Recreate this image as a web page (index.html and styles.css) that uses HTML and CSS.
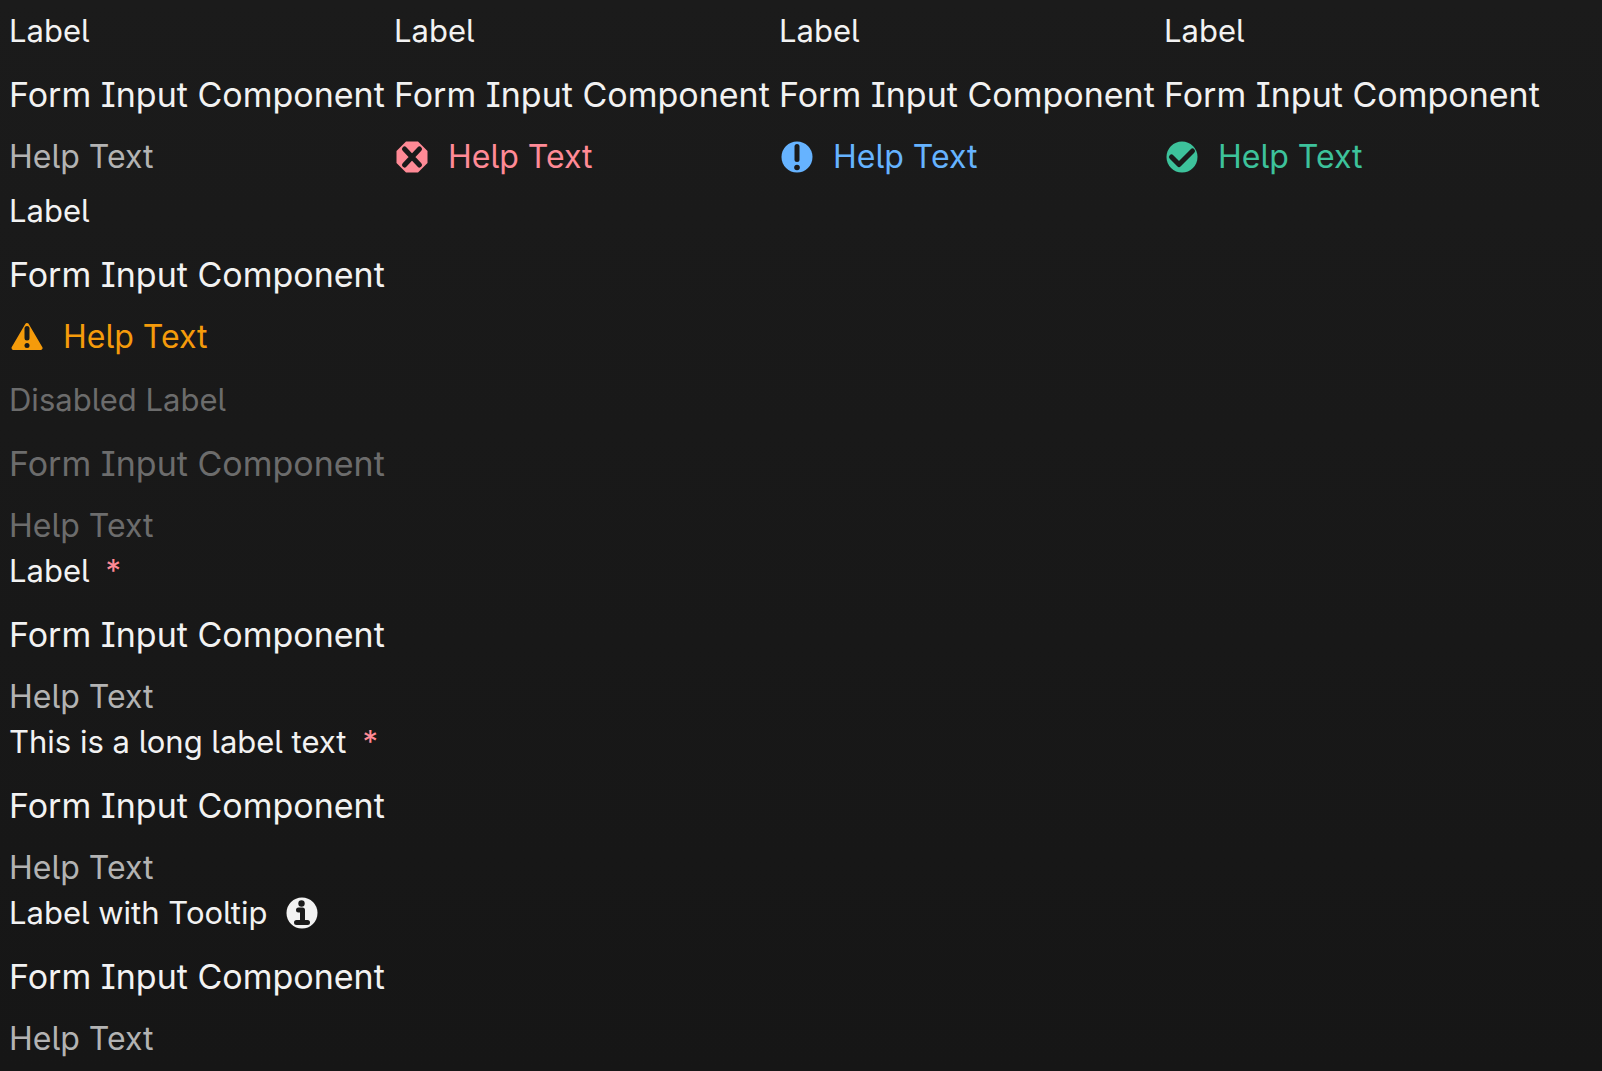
FILE: index.html
```html
<!DOCTYPE html>
<html lang="en">
<head>
<meta charset="utf-8">
<title>Form fields</title>
<link rel="stylesheet" href="styles.css">
</head>
<body>
<main class="fields">
  <div class="row row-status">
    <section class="field"><h2 class="label">Label</h2><p class="control">Form Input Component</p><p class="help">Help Text</p></section>
    <section class="field"><h2 class="label">Label</h2><p class="control">Form Input Component</p>
      <p class="help error"><svg class="icon" viewBox="0 0 32 32" aria-hidden="true"><path fill="currentColor" d="M10 0.500H22L31.500 10V22L22 31.500H10L0.500 22V10Z"/><path class="cut" d="M8.500 8L23.500 24M23.500 8L8.500 24"/></svg>Help Text</p></section>
    <section class="field"><h2 class="label">Label</h2><p class="control">Form Input Component</p>
      <p class="help info"><svg class="icon" viewBox="0 0 32 32" aria-hidden="true"><circle cx="16" cy="16" r="15.500" fill="currentColor"/><path class="cut" d="M16 5.500V18.500"/><circle class="dot" cx="16" cy="26.500" r="2.800"/></svg>Help Text</p></section>
    <section class="field"><h2 class="label">Label</h2><p class="control">Form Input Component</p>
      <p class="help success"><svg class="icon" viewBox="0 0 32 32" aria-hidden="true"><circle cx="16" cy="16" r="15.500" fill="currentColor"/><path class="cut" d="M5.500 16L13 23.500L26.500 10"/></svg>Help Text</p></section>
  </div>
  <div class="row row-warning">
    <section class="field"><h2 class="label">Label</h2><p class="control">Form Input Component</p>
      <p class="help warning"><svg class="icon" viewBox="0 0 32 32" aria-hidden="true"><path fill="currentColor" stroke="currentColor" stroke-width="4" stroke-linejoin="round" d="M16 4L29.500 27H2.500Z"/><path class="cut" d="M16 7.500V17"/><circle class="dot" cx="16" cy="24.500" r="2.500"/></svg>Help Text</p></section>
  </div>
  <section class="field disabled"><h2 class="label">Disabled Label</h2><p class="control">Form Input Component</p><p class="help">Help Text</p></section>
  <section class="field"><h2 class="label">Label<span class="required">*</span></h2><p class="control">Form Input Component</p><p class="help">Help Text</p></section>
  <section class="field"><h2 class="label">This is a long label text<span class="required">*</span></h2><p class="control">Form Input Component</p><p class="help">Help Text</p></section>
  <section class="field"><h2 class="label">Label with Tooltip<button class="tip" type="button" aria-label="More information"><svg class="icon" viewBox="0 0 32 32" aria-hidden="true"><circle cx="16" cy="16" r="15.500" fill="currentColor"/><circle class="dot" cx="15.500" cy="6.500" r="3.200"/><path class="cut" d="M12.500 13H16.500V25M10.500 25.500H21.500"/></svg></button></h2><p class="control">Form Input Component</p><p class="help">Help Text</p></section>
</main>
</body>
</html>
```
FILE: styles.css
```css
body {
  margin: 0;
  min-height: 100vh;
  background: linear-gradient(#1b1b1b, #161616);
  color: #f2f2f2;
  font-family: Inter, "Noto Sans", sans-serif;
  font-feature-settings: "cv05", "cv08";
}

.fields {
  padding: 8px 0 0 9px;
}

.row {
  display: flex;
  flex-wrap: wrap;
  gap: 10px;
}

.row-status {
  padding-bottom: 9px;
}

.row-warning {
  padding-bottom: 18px;
}

.field {
  width: 375px;
  white-space: nowrap;
}

.label {
  display: flex;
  align-items: center;
  margin: 0 0 10px;
  font-size: 31px;
  font-weight: 400;
  line-height: 45px;
}

.control {
  margin: 0 0 7px;
  font-size: 34px;
  line-height: 64px;
}

.help {
  display: flex;
  align-items: center;
  gap: 20px;
  margin: 0;
  font-size: 32px;
  line-height: 45px;
  color: #b3b3b3;
}

.error { color: #ff8a96; }
.info { color: #66b3ff; }
.success { color: #3dc29b; }
.warning { color: #f59b0b; }

.disabled,
.disabled .help {
  color: #6c6c6c;
}

.required {
  margin-left: 16px;
  color: #ff8a96;
}

.tip {
  display: flex;
  margin: 0 0 0 18px;
  padding: 0;
  border: 0;
  background: none;
  color: inherit;
}

.icon {
  width: 32px;
  height: 32px;
}

.help .icon {
  margin-left: 2px;
}

.cut {
  fill: none;
  stroke: #1a1a1a;
  stroke-width: 5;
  stroke-linecap: round;
  stroke-linejoin: round;
}

.dot {
  fill: #1a1a1a;
}
```
